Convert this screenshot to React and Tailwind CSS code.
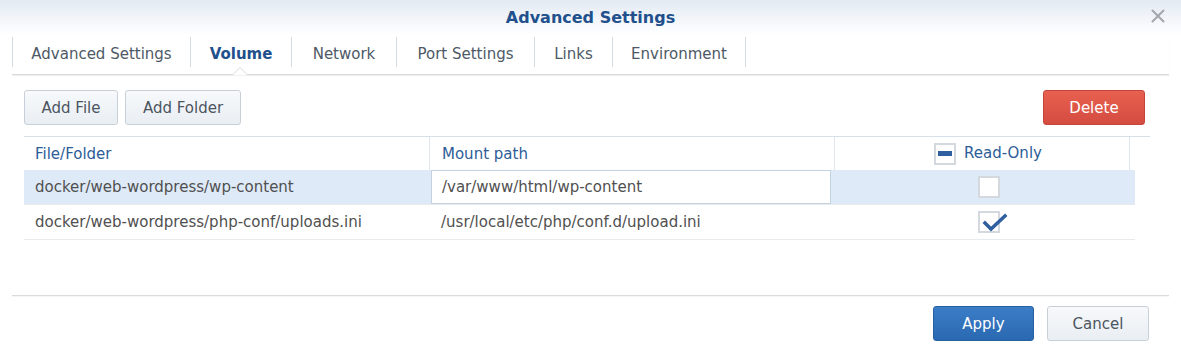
import { X } from 'lucide-react';

const tabs = [
  { label: 'Advanced Settings', w: 'w-[178px]' },
  { label: 'Volume', w: 'w-[101px]' },
  { label: 'Network', w: 'w-[105px]' },
  { label: 'Port Settings', w: 'w-[138px]' },
  { label: 'Links', w: 'w-[78px]' },
  { label: 'Environment', w: 'w-[134px]' },
];

const rows = [
  { src: 'docker/web-wordpress/wp-content', mount: '/var/www/html/wp-content', ro: false, selected: true },
  { src: 'docker/web-wordpress/php-conf/uploads.ini', mount: '/usr/local/etc/php/conf.d/upload.ini', ro: true },
];

function Checkbox({ state }) {
  return (
    <span className="relative inline-flex h-[22px] w-[22px] items-center justify-center border-2 border-[#d3d9df] bg-white">
      {state === 'mixed' && <span className="h-[5px] w-[14px] bg-[#2f5f9e]" />}
      {state === 'checked' && (
        <svg width="26" height="20" viewBox="0 0 26 20" className="absolute left-[2px] top-[0px]">
          <path d="M3 10 L9 16 L23 3" fill="none" stroke="#2f5f9e" strokeWidth="3.5" strokeLinecap="square" />
        </svg>
      )}
    </span>
  );
}

function GrayButton({ children, className = '' }) {
  return (
    <button className={`h-[35px] rounded-[3px] border border-[#c7d0d9] bg-gradient-to-b from-[#f7f9fb] to-[#e9eef3] pt-[2px] text-[15px] text-[#4c5560] ${className}`}>
      {children}
    </button>
  );
}

export default function App() {
  return (
    <div className="h-[351px] w-[1181px] overflow-hidden bg-white text-[15px] text-[#505050]" style={{ fontFamily: '"DejaVu Sans", Verdana, sans-serif' }}>
      {/* title */}
      <div className="relative flex h-[35px] items-center justify-center bg-gradient-to-b from-[#e3eaf3] to-white">
        <span className="text-[16px] font-bold text-[#21508d]">Advanced Settings</span>
        <X className="absolute right-[12px] top-[5px] text-[#a3a7ab]" size={22} strokeWidth={2.2} />
      </div>

      {/* tabs */}
      <div className="relative mx-[12px] flex h-[40px] border-b border-[#d7d9dc] shadow-[0_1px_1px_rgba(0,0,0,0.06)]">
        {tabs.map((t, i) => (
          <div key={t.label} className={`mt-[2px] flex h-[30px] items-center justify-center border-l border-[#d4dbe3] pt-[4px] ${t.w} ${i === tabs.length - 1 ? 'border-r' : ''}`}>
            <span className={i === 1 ? 'font-bold text-[#21508d]' : 'text-[#4d5966]'}>{t.label}</span>
          </div>
        ))}
        <span className="absolute bottom-[-1px] left-[220px] h-0 w-0 border-x-[8px] border-b-[8px] border-x-transparent border-b-[#d7d9dc]" />
        <span className="absolute bottom-[-1px] left-[221px] h-0 w-0 border-x-[7px] border-b-[7px] border-x-transparent border-b-white" />
      </div>

      {/* toolbar */}
      <div className="mt-[15px] flex pl-[24px] pr-[36px]">
        <GrayButton className="w-[94px]">Add File</GrayButton>
        <GrayButton className="ml-[7px] w-[116px]">Add Folder</GrayButton>
        <button className="ml-auto h-[35px] w-[102px] rounded-[3px] border border-[#c5453b] bg-gradient-to-b from-[#e8604f] to-[#d34c40] pt-[2px] text-[15px] text-white">
          Delete
        </button>
      </div>

      {/* grid */}
      <div className="ml-[24px] mt-[11px] w-[1126px] border-t border-[#d5e0eb]">
        <div className="flex h-[33px] text-[#2d5d99]">
          <div className="flex w-[405px] items-center pl-[11px] pt-[1px]">File/Folder</div>
          <div className="flex w-[406px] items-center border-x border-[#dfe6ee] pl-[12px] pt-[1px]">Mount path</div>
          <div className="flex w-[295px] items-center justify-center gap-[8px] border-r border-[#dfe6ee] pl-[12px]">
            <Checkbox state="mixed" />
            <span>Read-Only</span>
          </div>
        </div>
        {rows.map((r) => (
          <div key={r.src} className={`flex h-[35px] w-[1111px] items-center border-b border-[#e8ebee] ${r.selected ? 'bg-[#deeaf8]' : ''}`}>
            <div className="w-[405px] pl-[11px]">{r.src}</div>
            <div className="w-[406px] pl-[2px]">
              {r.selected ? (
                <div className="flex h-[34px] w-[400px] items-center border border-[#c3d1e1] bg-white pl-[10px]">{r.mount}</div>
              ) : (
                <div className="pl-[10px]">{r.mount}</div>
              )}
            </div>
            <div className="flex w-[295px] justify-center pl-[12px]">
              <Checkbox state={r.ro ? 'checked' : 'none'} />
            </div>
          </div>
        ))}
      </div>

      {/* footer */}
      <div className="mx-[12px] mt-[55px] border-t border-[#d9dbde] shadow-[0_1px_1px_rgba(0,0,0,0.05)]" />
      <div className="mt-[10px] flex justify-end pr-[32px]">
        <button className="h-[35px] w-[101px] rounded-[3px] border border-[#25609f] bg-gradient-to-b from-[#3b7dc7] to-[#2a69b1] pt-[2px] text-[15px] text-white">
          Apply
        </button>
        <GrayButton className="ml-[13px] w-[102px]">Cancel</GrayButton>
      </div>
    </div>
  );
}
